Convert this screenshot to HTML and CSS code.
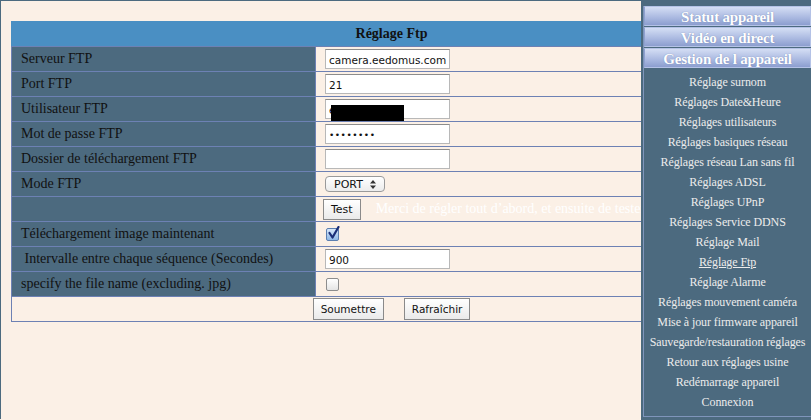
FILE: index.html
```html
<!DOCTYPE html>
<html lang="fr">
<head>
    <meta charset="UTF-8">
    <title>Réglage Ftp</title>
    <link rel="stylesheet" href="styles.css">
</head>
<body>
    <div class="page">
        <table class="ftp">
            <tr><th colspan="2">Réglage Ftp</th></tr>
            <tr>
                <td class="lbl">Serveur FTP</td>
                <td class="val"><input class="txt" type="text" value="camera.eedomus.com"></td>
            </tr>
            <tr>
                <td class="lbl">Port FTP</td>
                <td class="val"><input class="txt" type="text" value="21"></td>
            </tr>
            <tr>
                <td class="lbl">Utilisateur FTP</td>
                <td class="val"><span class="hidden-wrap"><input class="txt" type="text" value="e"><span class="redact"></span></span></td>
            </tr>
            <tr>
                <td class="lbl">Mot de passe FTP</td>
                <td class="val"><input class="txt" type="password" value="12345678"></td>
            </tr>
            <tr>
                <td class="lbl">Dossier de téléchargement FTP</td>
                <td class="val"><input class="txt" type="text" value=""></td>
            </tr>
            <tr>
                <td class="lbl">Mode FTP</td>
                <td class="val">
                    <span class="select-wrap">
                        <select class="sel"><option>PORT</option><option>PASV</option></select>
                        <svg class="arrows" width="6" height="9" viewBox="0 0 6 9"><path d="M3 0 L6 3.5 H0 Z M0 5.5 H6 L3 9 Z" fill="#333"/></svg>
                    </span>
                </td>
            </tr>
            <tr>
                <td class="lbl"></td>
                <td class="val test-cell"><button class="btn">Test</button><span class="hint">Merci de régler tout d’abord, et ensuite de tester</span></td>
            </tr>
            <tr>
                <td class="lbl">Téléchargement image maintenant</td>
                <td class="val">
                    <span class="check on">
                        <svg width="13" height="14" viewBox="0 0 13 14"><path d="M2.5 7 L5.5 11.5 L11.5 1" fill="none" stroke="#1b2f78" stroke-width="2.2" stroke-linecap="round" stroke-linejoin="round"/></svg>
                    </span>
                </td>
            </tr>
            <tr>
                <td class="lbl">&nbsp;Intervalle entre chaque séquence (Secondes)</td>
                <td class="val"><input class="txt" type="text" value="900"></td>
            </tr>
            <tr>
                <td class="lbl">specify the file name (excluding. jpg)</td>
                <td class="val"><span class="check"></span></td>
            </tr>
            <tr>
                <td colspan="2" class="actions"><button class="btn">Soumettre</button><button class="btn">Rafraîchir</button></td>
            </tr>
        </table>
    </div>

    <aside class="side">
        <div class="side-box">
            <a class="tab" href="#">Statut appareil</a>
            <a class="tab" href="#">Vidéo en direct</a>
            <a class="tab" href="#">Gestion de l appareil</a>
            <ul class="menu">
                <li><a href="#">Réglage surnom</a></li>
                <li><a href="#">Réglages Date&amp;Heure</a></li>
                <li><a href="#">Réglages utilisateurs</a></li>
                <li><a href="#">Réglages basiques réseau</a></li>
                <li><a href="#">Réglages réseau Lan sans fil</a></li>
                <li><a href="#">Réglages ADSL</a></li>
                <li><a href="#">Réglages UPnP</a></li>
                <li><a href="#">Réglages Service DDNS</a></li>
                <li><a href="#">Réglage Mail</a></li>
                <li><a class="current" href="#">Réglage Ftp</a></li>
                <li><a href="#">Réglage Alarme</a></li>
                <li><a href="#">Réglages mouvement caméra</a></li>
                <li><a href="#">Mise à jour firmware appareil</a></li>
                <li><a href="#">Sauvegarde/restauration réglages</a></li>
                <li><a href="#">Retour aux réglages usine</a></li>
                <li><a href="#">Redémarrage appareil</a></li>
                <li><a href="#">Connexion</a></li>
            </ul>
        </div>
    </aside>
</body>
</html>
```
FILE: styles.css
```css
html, body {
    margin: 0;
    height: 420px;
    overflow: hidden;
}

body {
    background: #fbf0e6;
    font-family: "Liberation Serif", serif;
    color: #111;
    position: relative;
}

/* Zone principale */
.page {
    height: 419px;
    border-top: 1px solid #4c6a7f;
    border-left: 1px solid #4c6a7f;
    padding: 20px 0 0 10px;
    box-sizing: border-box;
}

.ftp {
    width: 761px;
    border-collapse: collapse;
    font-size: 14px;
}

.ftp th {
    background: #4a8fc3;
    height: 24px;
    font-size: 14px;
    font-weight: bold;
    padding: 0;
    border: 1px solid #4a8fc3;
    border-bottom: 1px solid #6d81b4;
}

.ftp tr {
    height: 25px;
}

.ftp td {
    border: 1px solid #6d81b4;
    padding: 0;
    height: 24px;
}

.lbl {
    width: 294px;
    background: #4c6a7f;
    padding-left: 9px !important;
    white-space: nowrap;
}

.val {
    padding-left: 9px !important;
}

.txt {
    width: 125px;
    height: 20px;
    box-sizing: border-box;
    border: 1px solid #b8b8b8;
    border-top-color: #8c8c8c;
    background: #fff;
    font-family: "DejaVu Sans", sans-serif;
    font-size: 10.5px;
    color: #111;
    padding: 1px 3px 0;
    margin: 0;
    vertical-align: middle;
}

.txt[type="password"] {
    font-size: 9px;
    letter-spacing: 0.5px;
}

.hidden-wrap {
    position: relative;
    display: inline-block;
    vertical-align: middle;
}

.redact {
    position: absolute;
    left: 6px;
    top: 6px;
    width: 73px;
    height: 16px;
    background: #000;
}

.select-wrap {
    position: relative;
    display: inline-block;
    vertical-align: middle;
}

.sel {
    appearance: none;
    -webkit-appearance: none;
    width: 60px;
    height: 16px;
    border: 1px solid #9a9a9a;
    border-radius: 4px;
    background: linear-gradient(#ffffff, #ececec);
    font-family: "DejaVu Sans", sans-serif;
    font-size: 11px;
    color: #111;
    padding: 0 0 0 8px;
    margin: 0;
    display: block;
}

.arrows {
    position: absolute;
    right: 9px;
    top: 4px;
    pointer-events: none;
}

.test-cell {
    padding-left: 7px !important;
    white-space: nowrap;
}

.btn {
    font-family: "DejaVu Sans", sans-serif;
    font-size: 10.5px;
    color: #111;
    background: linear-gradient(#ffffff, #eaeaea);
    border: 1px solid #8a8a8a;
    border-radius: 0;
    height: 21px;
    padding: 0 7px;
    margin: 0;
    vertical-align: middle;
}

.test-cell .btn {
    padding: 0 7px;
    font-size: 11px;
}

.hint {
    color: #ffffff;
    margin-left: 15px;
    vertical-align: middle;
}

.check {
    display: inline-block;
    position: relative;
    width: 11px;
    height: 11px;
    border: 1px solid #8d8d8d;
    border-radius: 2px;
    background: linear-gradient(#ffffff, #e4e4e4);
    vertical-align: middle;
    margin-left: 1px;
}

.check.on {
    background: linear-gradient(#d8e8fa, #8fb8e6);
    border-color: #5c7fb0;
}

.check svg {
    position: absolute;
    left: 0;
    top: -3px;
}

.actions {
    text-align: center;
    height: 24px;
}

.actions .btn {
    height: 22px;
    margin: 0 10px;
}

/* Menu de droite */
.side {
    position: absolute;
    top: 0;
    right: 0;
    width: 170px;
    height: 420px;
    background: #4c6a7f;
    padding: 6px 0 3px 2px;
    box-sizing: border-box;
}

.side-box {
    height: 100%;
    border-left: 1px solid #7f95bb;
    border-bottom: 1px solid #7f95bb;
    box-sizing: border-box;
}

.tab {
    display: block;
    height: 20px;
    line-height: 20px;
    margin-bottom: 1px;
    text-align: center;
    text-decoration: none;
    color: #fff;
    font-weight: bold;
    font-size: 15px;
    letter-spacing: -0.2px;
    background: linear-gradient(#d4def4, #a9b8e0 60%, #8c9ecf);
    border: 1px solid #b4c2e6;
    border-left-color: #8fa1d0;
    box-sizing: border-box;
    text-shadow: 0 0 1px #6a7fae;
}

.menu {
    list-style: none;
    margin: 0;
    padding: 3px 0 0;
}

.menu li {
    height: 20px;
    line-height: 20px;
    text-align: center;
    font-size: 12px;
    letter-spacing: -0.1px;
}

.menu a {
    color: #ececec;
    text-decoration: none;
    white-space: nowrap;
}

.menu a.current {
    text-decoration: underline;
}
```
